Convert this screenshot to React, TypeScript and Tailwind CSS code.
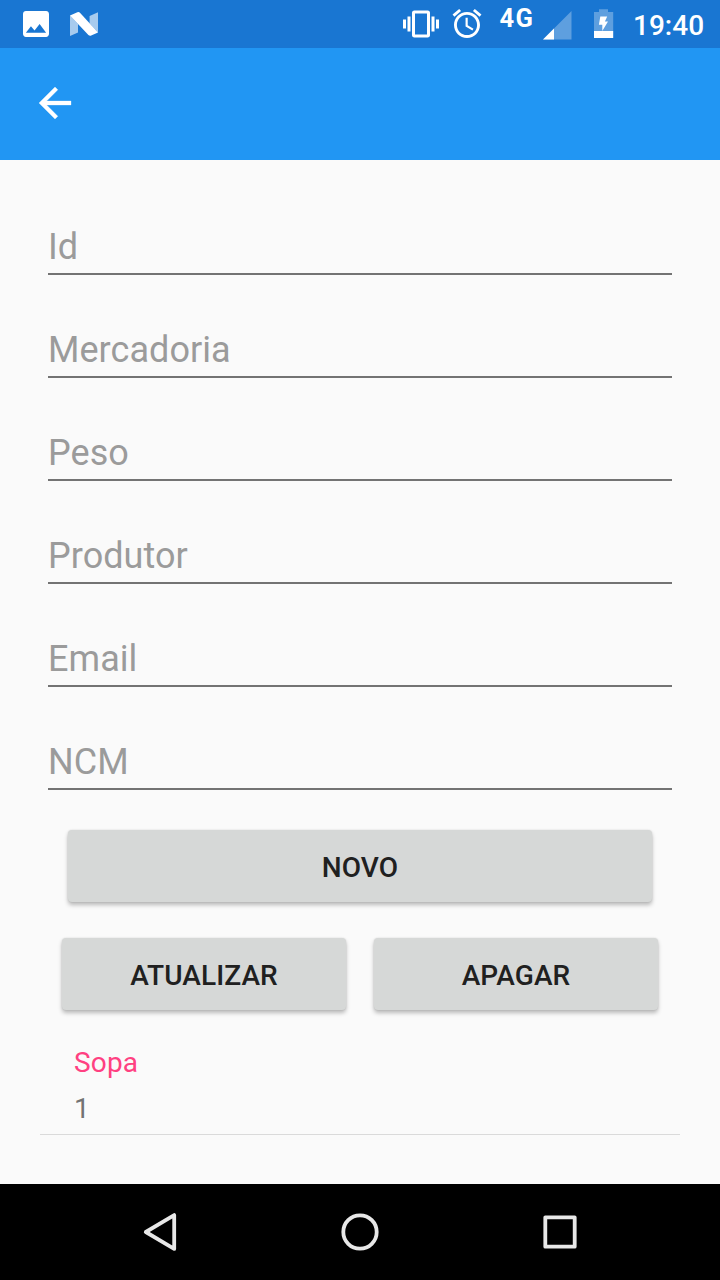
const fields = ["Id", "Mercadoria", "Peso", "Produtor", "Email", "NCM"];

function StatusBar() {
  return (
    <div className="flex h-12 shrink-0 items-start bg-[#1976d2] text-white">
      <svg className="ml-[23px] h-12 w-[26px]" viewBox="23 0 26 48">
        <path
          fill="#fff"
          transform="translate(18.67 6.67) scale(1.444)"
          d="M21 19V5c0-1.1-.9-2-2-2H5c-1.1 0-2 .9-2 2v14c0 1.1.9 2 2 2h14c1.1 0 2-.9 2-2zM8.5 13.5l2.5 3.01L14.5 12l4.5 6H5l3.5-4.5z"
        />
      </svg>
      <svg className="ml-[21px] h-12 w-7" viewBox="70 0 28 48">
        <path fill="#fff" fillOpacity=".62" d="M70 15.3L78 24V32.4L70 36zM98 12.2V32.4L89.6 23.4V16z" />
        <path fill="#fff" d="M70 15.5L77.4 12.3Q79 11.7 80.2 13L98 32.4L91.2 35.6Q89.6 36.2 88.4 35z" />
      </svg>
      <svg className="ml-auto h-12 w-9" viewBox="403 0 36 48">
        <path
          fill="#fff"
          transform="translate(403 6) scale(1.5)"
          d="M0 15h2V9H0v6zm3 2h2V7H3v10zm19-8v6h2V9h-2zm-3 8h2V7h-2v10zM16.5 3h-9C6.67 3 6 3.67 6 4.5v15c0 .83.67 1.5 1.5 1.5h9c.83 0 1.5-.67 1.5-1.5v-15c0-.83-.67-1.5-1.5-1.5zM16 19H8V5h8v14z"
        />
      </svg>
      <svg className="ml-[13px] h-12 w-[30px]" viewBox="452 0 30 48">
        <path
          fill="#fff"
          transform="translate(449.67 6.2) scale(1.444)"
          d="M22 5.72l-4.6-3.86-1.29 1.53 4.6 3.86L22 5.72zM7.88 3.39L6.6 1.86 2 5.71l1.29 1.53 4.59-3.85zM12.5 8H11v6l4.75 2.85.75-1.23-4-2.37V8zM12 4c-4.97 0-9 4.03-9 9s4.02 9 9 9c4.97 0 9-4.03 9-9s-4.03-9-9-9zm0 16c-3.87 0-7-3.13-7-7s3.13-7 7-7 7 3.13 7 7-3.13 7-7 7z"
        />
      </svg>
      <span className="ml-[17.5px] w-[43.5px] pt-[3px] text-[25.5px] leading-[30px] font-bold tracking-[1.4px]">4G</span>
      <svg className="h-12 w-[29px]" viewBox="543 0 29 48">
        <path fill="#fff" fillOpacity=".3" d="M543 39.5L571.5 11V39.5z" />
        <path fill="#fff" d="M543 39.5L554 28.5V39.5z" />
      </svg>
      <svg className="ml-[22px] h-12 w-5" viewBox="594 0 20 48">
        <path fill="#fff" fillOpacity=".3" d="M594 31V12H599V9.3H608V12H613.2V31z" />
        <path fill="#fff" d="M600.3 16.5H607.2L604.9 21.5H608L602.3 31V24.8H598.9zM594 31H613.2V38H594z" />
      </svg>
      <span className="ml-[19px] w-[87px] pt-[9px] text-[28px] leading-[33px] font-medium">19:40</span>
    </div>
  );
}

function ActionButton({ label }: { label: string }) {
  return (
    <button className="h-[72px] flex-1 rounded-[4px] bg-[#d6d8d7] pt-0.5 text-[28px] leading-[33px] font-medium tracking-[0.1px] text-[#202020] shadow-[0_3px_4px_rgba(0,0,0,0.26),0_0_2px_rgba(0,0,0,0.12)]">
      {label}
    </button>
  );
}

export default function App() {
  return (
    <div className="flex h-[1280px] w-[720px] flex-col overflow-hidden bg-[#fafafa] font-['Roboto',sans-serif]">
      <StatusBar />
      <header className="flex h-28 shrink-0 items-center bg-[#2196f3] pl-[31px]">
        <button aria-label="Voltar" className="-mt-0.5">
          <svg className="block h-12 w-12" viewBox="0 0 24 24" fill="#fff" stroke="#fff" strokeWidth=".15">
            <path d="M20 11H7.83l5.59-5.59L12 4l-8 8 8 8 1.41-1.41L7.83 13H20v-2z" />
          </svg>
        </button>
      </header>
      <main className="flex flex-1 flex-col px-10 pt-3">
        <div className="px-2">
          {fields.map((field) => (
            <input
              key={field}
              aria-label={field}
              placeholder={field}
              className="block h-[103px] w-full border-b-2 border-[#737373] pt-[54px] pb-[5px] text-[36px] leading-[42px] tracking-[0.05px] outline-none placeholder:text-[#9b9b9b]"
            />
          ))}
        </div>
        <div className="mt-10 flex px-7">
          <ActionButton label="NOVO" />
        </div>
        <div className="mt-9 flex gap-7 px-[22px]">
          <ActionButton label="ATUALIZAR" />
          <ActionButton label="APAGAR" />
        </div>
        <div className="mt-9 flex h-[89px] flex-col gap-[13px] border-b border-[#dadada] pl-[34px] text-[28px] leading-[33px] tracking-[0.15px]">
          <span className="text-[#ff4081]">Sopa</span>
          <span className="text-[#737373]">1</span>
        </div>
      </main>
      <nav className="flex h-24 shrink-0 items-center justify-center gap-[152px] bg-black">
        <svg className="h-12 w-12" viewBox="136 1208 48 48" fill="none" stroke="#e8e8e8" strokeWidth="3.8" strokeLinejoin="round">
          <path d="M145.8 1232L174.2 1215.1V1248.9z" />
        </svg>
        <svg className="h-12 w-12" viewBox="336 1208 48 48" fill="none" stroke="#e8e8e8" strokeWidth="3.8">
          <circle cx="360" cy="1232" r="16.7" />
        </svg>
        <svg className="h-12 w-12" viewBox="536 1208 48 48" fill="none" stroke="#e8e8e8" strokeWidth="3.8" strokeLinejoin="round">
          <rect x="545.3" y="1217.3" width="29.4" height="29.4" />
        </svg>
      </nav>
    </div>
  );
}
